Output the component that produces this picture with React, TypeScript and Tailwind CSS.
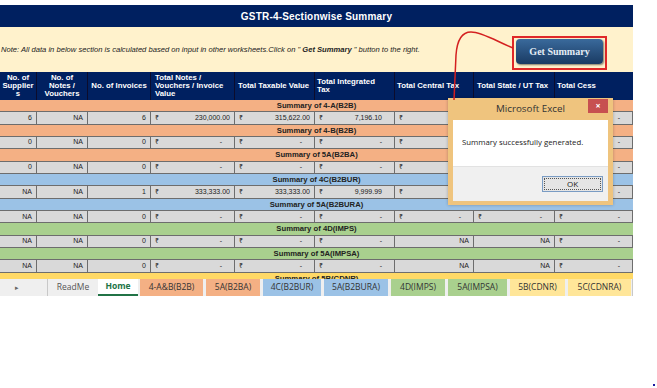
import React from 'react';

type Cell = string | { r: string };

const COLS = 'grid grid-cols-[37px_51px_63px_84px_80px_80px_79px_81px_78px]';

const BAND: Record<string, string> = {
  orange: 'bg-[#f4b084]',
  blue: 'bg-[#9bc2e6]',
  green: 'bg-[#a9d08e]',
  yellow: 'bg-[#ffd966]',
};

const dash = { r: '-' };

const rows: ({ band: string; color: string } | { cells: Cell[] })[] = [
  { band: 'Summary of 4-A(B2B)', color: 'orange' },
  { cells: ['6', 'NA', '6', { r: '230,000.00' }, { r: '315,622.00' }, { r: '7,196.10' }, dash, dash, dash] },
  { band: 'Summary of 4-B(B2B)', color: 'orange' },
  { cells: ['0', 'NA', '0', dash, dash, dash, dash, dash, dash] },
  { band: 'Summary of 5A(B2BA)', color: 'orange' },
  { cells: ['0', 'NA', '0', dash, dash, dash, dash, dash, dash] },
  { band: 'Summary of 4C(B2BUR)', color: 'blue' },
  { cells: ['NA', 'NA', '1', { r: '333,333.00' }, { r: '333,333.00' }, { r: '9,999.99' }, dash, dash, dash] },
  { band: 'Summary of 5A(B2BURA)', color: 'blue' },
  { cells: ['NA', 'NA', '0', dash, dash, dash, dash, dash, dash] },
  { band: 'Summary of 4D(IMPS)', color: 'green' },
  { cells: ['NA', 'NA', '0', dash, dash, dash, 'NA', 'NA', dash] },
  { band: 'Summary of 5A(IMPSA)', color: 'green' },
  { cells: ['NA', 'NA', '0', dash, dash, dash, 'NA', 'NA', dash] },
  { band: 'Summary of 5B(CDNR)', color: 'yellow' },
];

const tabs = [
  { name: '4-A&B(B2B)', w: 'w-[63px]', bg: 'bg-[#f4b084]' },
  { name: '5A(B2BA)', w: 'w-[54px]', bg: 'bg-[#f4b084]' },
  { name: '4C(B2BUR)', w: 'w-[58px]', bg: 'bg-[#9bc2e6]' },
  { name: '5A(B2BURA)', w: 'w-[64px]', bg: 'bg-[#9bc2e6]' },
  { name: '4D(IMPS)', w: 'w-[54px]', bg: 'bg-[#a9d08e]' },
  { name: '5A(IMPSA)', w: 'w-[59px]', bg: 'bg-[#a9d08e]' },
  { name: '5B(CDNR)', w: 'w-[55px]', bg: 'bg-[#ffe699]' },
  { name: '5C(CDNRA)', w: 'w-[63px]', bg: 'bg-[#ffe699]' },
];

function DataCell({ c, i }: { c: Cell; i: number }) {
  if (typeof c === 'string') {
    return (
      <div className="border-r border-[#6d6d6d] flex items-center justify-end pr-[4px]">{c}</div>
    );
  }
  const isDash = c.r === '-';
  const pad = isDash || i === 5 ? 'pr-[12px]' : 'pr-[4px]';
  return (
    <div className={`border-r border-[#6d6d6d] flex items-center justify-between pl-[4px] ${pad}`}>
      <span>₹</span>
      <span>{c.r}</span>
    </div>
  );
}

export default function App() {
  return (
    <div className="relative w-[657px] h-[388px] overflow-hidden bg-white font-['Liberation_Sans',Arial,sans-serif] text-black">
      <div className="w-[633px] pt-[5px]">
        {/* TITLE */}
        <div className="h-[22px] bg-[#002060] flex items-center justify-center text-white font-bold text-[10px] tracking-[0.2px]">
          GSTR-4-Sectionwise Summary
        </div>

        {/* NOTE + BUTTON */}
        <div className="h-[45px] bg-[#fff2cc] flex items-center">
          <div className="italic text-[7.6px] pl-[1px] text-[#222]">
            Note: All data in below section is calculated based on input in other worksheets.Click on "
            <b> Get Summary </b>" button to the right.
          </div>
          <div className="ml-auto mr-[26px] mt-[6px] border-2 border-[#e02828] px-[2px] pt-[1px] pb-[4px]">
            <div className="w-[87px] h-[25px] rounded-[4px] bg-gradient-to-b from-[#3a6a9c] to-[#1a3b63] shadow-[1px_1px_2px_rgba(0,0,0,0.5)] flex items-center justify-center text-[#e6edf5] font-bold text-[10px] font-['Liberation_Serif',serif]">
              Get Summary
            </div>
          </div>
        </div>

        {/* HEADER */}
        <div className={`${COLS} h-[28px] bg-[#002060] text-white font-bold text-[7.8px] leading-[7.8px]`}>
          <div className="border-r border-[#0c0c2c] flex items-center justify-center text-center">
            No. of<br />Supplier<br />s
          </div>
          <div className="border-r border-[#0c0c2c] flex items-center justify-center text-center">
            No. of<br />Notes /<br />Vouchers
          </div>
          <div className="border-r border-[#0c0c2c] flex items-center justify-center">No. of Invoices</div>
          <div className="border-r border-[#0c0c2c] flex items-center pl-[4px]">
            Total Notes /<br />Vouchers / Invoice<br />Value
          </div>
          <div className="border-r border-[#0c0c2c] flex items-center pl-[3px]">Total Taxable Value</div>
          <div className="border-r border-[#0c0c2c] flex items-center pl-[2px]">
            Total Integrated<br />Tax
          </div>
          <div className="border-r border-[#0c0c2c] flex items-center pl-[2px]">Total Central Tax</div>
          <div className="border-r border-[#0c0c2c] flex items-center pl-[3px]">Total State / UT Tax</div>
          <div className="flex items-center pl-[2px]">Total Cess</div>
        </div>

        {/* ROWS */}
        <div className="h-[179px] overflow-hidden">
          {rows.map((row, idx) =>
            'band' in row ? (
              <div
                key={idx}
                className={`h-[12.35px] ${BAND[row.color]} border-b border-[#6d6d6d] flex items-center justify-center font-bold text-[7.7px] text-[#222]`}
              >
                {row.band}
              </div>
            ) : (
              <div key={idx} className={`${COLS} h-[12.35px] bg-[#d9d9d9] border-b border-[#6d6d6d] text-[7px] text-[#222]`}>
                {row.cells.map((c, i) => (
                  <DataCell key={i} c={c} i={i} />
                ))}
              </div>
            )
          )}
        </div>

        {/* SHEET TABS */}
        <div className="h-[17px] bg-[#efefef] flex items-stretch text-[8.5px] leading-none font-['Open_Sans',sans-serif] text-[#333] border-r border-[#c8c8c8]">
          <div className="w-[48px] border-r border-[#c8c8c8] flex items-center pl-[15px] text-[#666] text-[7px]">▸</div>
          <div className="w-[50px] flex items-center justify-center text-[#555]">ReadMe</div>
          <div className="w-[40px] bg-white flex items-center justify-center font-bold text-[#217346] border-b-2 border-[#217346]">
            Home
          </div>
          <div className="flex gap-[3px] ml-[2px]">
            {tabs.map((t) => (
              <div key={t.name} className={`${t.w} ${t.bg} flex items-center justify-center`}>
                {t.name}
              </div>
            ))}
          </div>
        </div>
      </div>

      {/* DIALOG */}
      <div className="absolute left-[448px] top-[98px] w-[165px] h-[107px] bg-[#efc47e] flex flex-col px-[5px] pb-[4px] shadow-[0_0_3px_rgba(0,0,0,0.25)]">
        <div className="h-[22px] relative flex items-center justify-center font-['Open_Sans',sans-serif] text-[9.8px] text-[#333]">
          Microsoft Excel
          <div className="absolute right-0 top-[1px] w-[20px] h-[14px] bg-[#c75050] flex items-center justify-center text-white text-[9px] font-bold">
            ×
          </div>
        </div>
        <div className="flex-1 flex flex-col bg-white">
          <div className="h-[46px] flex items-center pl-[9px] font-['Open_Sans',sans-serif] text-[7.8px] text-[#222]">
            Summary successfully generated.
          </div>
          <div className="flex-1 bg-[#f0f0f0] border-t border-[#e2e2e2] flex items-center justify-end pr-[5px]">
            <div className="w-[61px] h-[16px] border border-[#7a9cc4] bg-[#e5e5e5] p-[1px]">
              <div className="w-full h-full border border-dotted border-[#555] flex items-center justify-center font-['Open_Sans',sans-serif] text-[8px] text-[#222]">
                OK
              </div>
            </div>
          </div>
        </div>
      </div>

      {/* RED ARROW LINE */}
      <svg className="absolute left-0 top-0 pointer-events-none" width="657" height="388">
        <path d="M513 48 C496 41 482 32 471 32 C461 32 457 41 456 55 L454 100" fill="none" stroke="#d42020" strokeWidth="1.5" />
      </svg>

      <div className="absolute left-[653px] top-[384px] w-[2px] h-[2px] bg-[#1a1aa0]" />
    </div>
  );
}
